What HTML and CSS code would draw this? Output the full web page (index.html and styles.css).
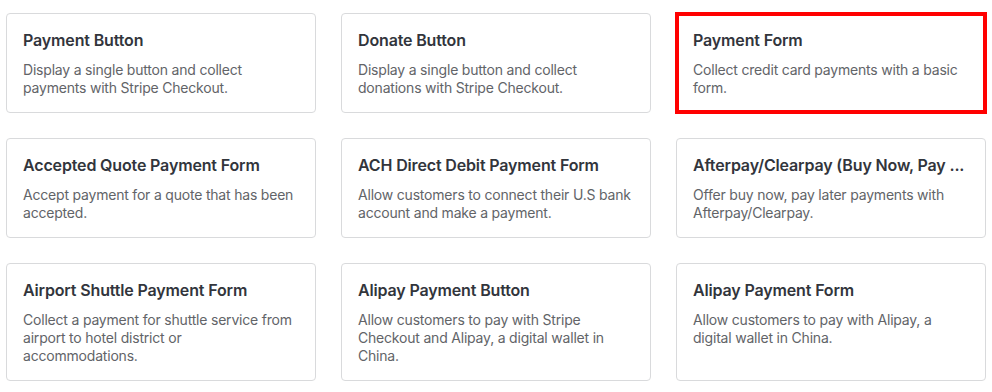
FILE: index.html
```html
<!DOCTYPE html>
<html lang="en">
<head>
    <meta charset="UTF-8">
    <title>Templates</title>
    <link rel="stylesheet" href="styles.css">
</head>
<body>
    <div class="template-grid">
        <div class="card">
            <h3>Payment Button</h3>
            <p>Display a single button and collect payments with Stripe Checkout.</p>
        </div>
        <div class="card">
            <h3>Donate Button</h3>
            <p>Display a single button and collect donations with Stripe Checkout.</p>
        </div>
        <div class="card selected">
            <h3>Payment Form</h3>
            <p>Collect credit card payments with a basic form.</p>
        </div>

        <div class="card">
            <h3>Accepted Quote Payment Form</h3>
            <p>Accept payment for a quote that has been accepted.</p>
        </div>
        <div class="card">
            <h3>ACH Direct Debit Payment Form</h3>
            <p>Allow customers to connect their U.S bank account and make a payment.</p>
        </div>
        <div class="card">
            <h3>Afterpay/Clearpay (Buy Now, Pay ...</h3>
            <p>Offer buy now, pay later payments with Afterpay/Clearpay.</p>
        </div>

        <div class="card">
            <h3>Airport Shuttle Payment Form</h3>
            <p>Collect a payment for shuttle service from airport to hotel district or accommodations.</p>
        </div>
        <div class="card">
            <h3>Alipay Payment Button</h3>
            <p>Allow customers to pay with Stripe Checkout and Alipay, a digital wallet in China.</p>
        </div>
        <div class="card">
            <h3>Alipay Payment Form</h3>
            <p>Allow customers to pay with Alipay, a digital wallet in China.</p>
        </div>
    </div>
</body>
</html>
```

FILE: styles.css
```css
body {
    margin: 0;
    background-color: #ffffff;
    font-family: Inter, "Noto Sans", sans-serif;
}

.template-grid {
    display: grid;
    grid-template-columns: repeat(3, 1fr);
    gap: 25px;
    padding: 13px 6px;
}

.card {
    border: 1px solid #d9dadc;
    border-radius: 4px;
    padding: 16px 17px 15px 16px;
    background-color: #fff;
    min-width: 0;
}

/* aktuell ausgewählte Vorlage */
.card.selected {
    outline: 4px solid #ff0000;
    outline-offset: -3px;
    border-radius: 0;
}

.card h3 {
    margin: 0;
    font-size: 16px;
    line-height: 20px;
    font-weight: 600;
    letter-spacing: -0.15px;
    color: #32353c;
    white-space: nowrap;
    overflow: hidden;
}

.card p {
    margin: 11px 0 0 0;
    font-size: 14px;
    line-height: 18px;
    letter-spacing: -0.2px;
    color: #626468;
}
```
